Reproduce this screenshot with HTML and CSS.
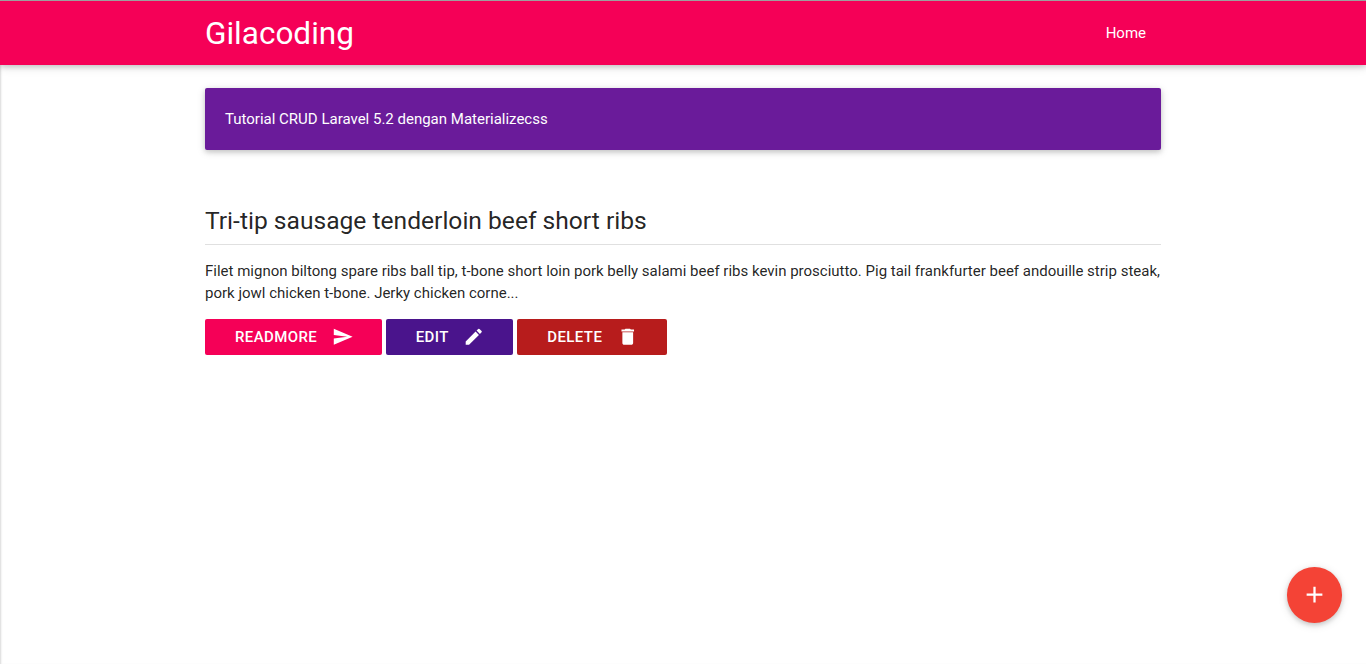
FILE: index.html
```html
<!DOCTYPE html>
<html lang="en">
  <head>
    <meta charset="UTF-8" />
    <meta name="viewport" content="width=device-width, initial-scale=1.0" />
    <title>Gilacoding</title>
    <link rel="stylesheet" href="styles.css">
  </head>
  <body>
    <nav class="navbar">
      <div class="container nav-wrapper">
        <a href="#" class="brand-logo">Gilacoding</a>
        <a href="#" class="nav-link">Home</a>
      </div>
    </nav>

    <main class="container">
      <div class="card-panel">Tutorial CRUD Laravel 5.2 dengan Materializecss</div>

      <article class="post">
        <h4 class="post-title">Tri-tip sausage tenderloin beef short ribs</h4>
        <p class="post-text">Filet mignon biltong spare ribs ball tip, t-bone short loin pork belly salami beef ribs kevin prosciutto. Pig tail frankfurter beef andouille strip steak, pork jowl chicken t-bone. Jerky chicken corne...</p>
        <div class="post-actions">
          <a href="#" class="btn btn-pink">Readmore
            <svg class="icon" viewBox="0 0 24 24"><path d="M2.01 21 23 12 2.01 3 2 10l15 2-15 2z" /></svg>
          </a>
          <a href="#" class="btn btn-purple">Edit
            <svg class="icon" viewBox="0 0 24 24"><path d="M3 17.25V21h3.75L17.81 9.94l-3.75-3.75L3 17.25zM20.71 7.04a1 1 0 0 0 0-1.41l-2.34-2.34a1 1 0 0 0-1.41 0l-1.83 1.83 3.75 3.75 1.83-1.83z" /></svg>
          </a>
          <a href="#" class="btn btn-red">Delete
            <svg class="icon" viewBox="0 0 24 24"><path d="M6 19c0 1.1.9 2 2 2h8c1.1 0 2-.9 2-2V7H6v12zM19 4h-3.5l-1-1h-5l-1 1H5v2h14V4z" /></svg>
          </a>
        </div>
      </article>
    </main>

    <a href="#" class="fab">
      <svg class="fab-icon" viewBox="0 0 24 24"><path d="M19 13h-6v6h-2v-6H5v-2h6V5h2v6h6v2z" /></svg>
    </a>
  </body>
</html>
```

FILE: styles.css
```css
html {
  font-size: 15px;
}

body {
  font-family: Roboto, sans-serif;
  margin: 0;
  padding: 0;
  min-height: 664px;
  box-sizing: border-box;
  background-color: #fff;
  color: rgba(0, 0, 0, 0.87);
  box-shadow: inset 2px 0 2px -1px rgba(0, 0, 0, 0.15);
  overflow: hidden;
}

a {
  color: inherit;
  text-decoration: none;
}

.container {
  width: 956px;
  margin: 0 auto;
}

.navbar {
  height: 64px;
  border-top: 1px solid #9e9e9e;
  background-color: #f50057;
  color: #fff;
  box-shadow: 0 2px 5px 0 rgba(0, 0, 0, 0.16), 0 2px 10px 0 rgba(0, 0, 0, 0.12);
}

.nav-wrapper {
  display: flex;
  justify-content: space-between;
  align-items: center;
  height: 64px;
}

.brand-logo {
  margin-top: 2px;
  font-size: 31.5px;
  line-height: 64px;
}

.nav-link {
  font-size: 15px;
  line-height: 64px;
  padding: 0 15px;
}

.card-panel {
  margin-top: 23px;
  padding: 20px;
  border-radius: 2px;
  background-color: #6a1b9a;
  color: #fff;
  font-size: 15px;
  line-height: 22px;
  box-shadow: 0 2px 5px 0 rgba(0, 0, 0, 0.16), 0 2px 10px 0 rgba(0, 0, 0, 0.12);
}

.post {
  margin-top: 51px;
}

.post-title {
  margin: 0;
  padding: 2px 0 5px;
  border-bottom: 1px solid #e0e0e0;
  font-size: 24.6px;
  font-weight: 400;
  line-height: 36px;
}

.post-text {
  margin: 15px 0;
  font-size: 15px;
  line-height: 22px;
}

.post-actions {
  display: flex;
  gap: 4px;
}

.btn {
  display: flex;
  align-items: center;
  height: 36px;
  padding: 0 30px;
  border-radius: 2px;
  color: #fff;
  font-size: 15px;
  font-weight: 500;
  letter-spacing: 0.4px;
  text-transform: uppercase;
}

.btn-pink {
  background-color: #f50057;
}

.btn-purple {
  background-color: #4a148c;
}

.btn-red {
  background-color: #b71c1c;
}

.icon {
  width: 21.5px;
  height: 21.5px;
  margin-left: 14.5px;
  margin-right: -1.5px;
  fill: #fff;
}

.fab {
  position: fixed;
  right: 24px;
  bottom: 41.5px;
  display: flex;
  align-items: center;
  justify-content: center;
  width: 55.5px;
  height: 55.5px;
  border-radius: 50%;
  background-color: #f44336;
  box-shadow: 0 2px 5px 0 rgba(0, 0, 0, 0.16), 0 2px 10px 0 rgba(0, 0, 0, 0.12);
}

.fab-icon {
  width: 27px;
  height: 27px;
  fill: #fff;
}
```
